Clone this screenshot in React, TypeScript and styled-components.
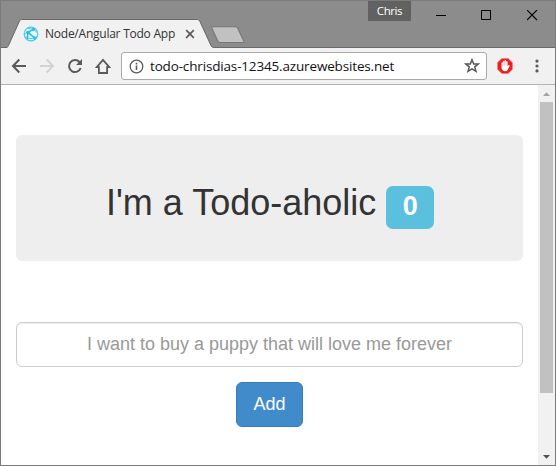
import React from "react";
import styled, { createGlobalStyle } from "styled-components";

const GlobalStyle = createGlobalStyle`
  *, *::before, *::after { box-sizing: border-box; }
  body { margin: 0; background: #fff; overflow: hidden; }
`;

const Window = styled.div`
  width: 556px;
  height: 466px;
  border: 1px solid #7b7b7b;
  display: flex;
  flex-direction: column;
  overflow: hidden;
  background: #fff;
  font-family: "Open Sans", "Noto Sans", sans-serif;
`;

const TitleBar = styled.div`
  flex: none;
  height: 47px;
  background: #8c8c8c;
  box-shadow: inset 0 -1px #696969;
  display: flex;
  align-items: flex-start;
`;

const Tab = styled.div`
  position: relative;
  width: 213px;
  height: 29px;
  margin-top: 18px;
  padding: 0 19px 0 22px;
  display: flex;
  align-items: center;
`;

const TabShape = styled.svg`
  position: absolute;
  inset: 0;
`;

const TabIcon = styled.svg`
  position: relative;
  flex: none;
  margin-right: 6px;
`;

const TabTitle = styled.span`
  position: relative;
  flex: 1;
  font-size: 12px;
  line-height: 16px;
  letter-spacing: -0.24px;
  white-space: nowrap;
  color: #333;
`;

const TabClose = styled.svg`
  position: relative;
  flex: none;
`;

const NewTab = styled.svg`
  flex: none;
  margin: 25px 0 0 -4px;
`;

const Profile = styled.div`
  width: 43px;
  height: 20px;
  margin-left: auto;
  background: #616161;
  color: #fff;
  font-size: 11.5px;
  line-height: 20px;
  letter-spacing: -0.4px;
  text-align: center;
`;

const WindowControls = styled.div`
  display: flex;
  gap: 34px;
  padding: 9px 17px 0 25px;
  svg { display: block; }
  svg:last-child { margin-left: 1px; }
`;

const Toolbar = styled.div`
  flex: none;
  height: 37px;
  background: #f1f1f1;
  border-bottom: 1px solid #b3b3b3;
  display: flex;
  align-items: center;
`;

const NavButtons = styled.div`
  width: 120px;
  display: flex;
  gap: 12px;
  padding-left: 10px;
  svg { display: block; }
`;

const AddressBar = styled.div`
  width: 366px;
  height: 28px;
  border: 1px solid #a9a9a9;
  border-radius: 3px;
  background: #fff;
  display: flex;
  align-items: center;
  padding: 0 6px 0 7px;
`;

const Url = styled.span`
  flex: 1;
  margin-left: 6px;
  font-size: 13.5px;
  line-height: 20px;
  letter-spacing: -0.16px;
  color: #111;
  white-space: nowrap;
`;

const Extensions = styled.div`
  flex: 1;
  display: flex;
  justify-content: space-between;
  padding: 0 13px 0 10px;
  align-items: center;
`;

const Viewport = styled.div`
  flex: 1;
  display: flex;
  min-height: 0;
`;

const Page = styled.main`
  flex: 1;
  padding: 50px 15px 0;
  text-align: center;
  font-family: "Liberation Sans", Arial, sans-serif;
`;

const Jumbotron = styled.header`
  height: 126px;
  padding-top: 48px;
  border-radius: 6px;
  background: #eee;
`;

const Heading = styled.h1`
  margin: 0;
  padding-left: 1px;
  font-size: 36px;
  font-weight: 500;
  line-height: 39.6px;
  color: #333;
  white-space: nowrap;
`;

const Count = styled.span`
  padding: 5.4px 16.4px 8px;
  border-radius: 6.75px;
  background: #5bc0de;
  color: #fff;
  font-size: 27px;
  font-weight: 700;
  line-height: 1;
  vertical-align: baseline;
`;

const TodoForm = styled.form`
  margin: 61px 0 0;
  display: flex;
  flex-direction: column;
  align-items: center;
  gap: 15px;
`;

const TodoInput = styled.input`
  width: 100%;
  height: 45px;
  padding: 10px 16px 11px;
  border: 1px solid #ccc;
  border-radius: 6px;
  box-shadow: inset 0 1px 1px rgba(0, 0, 0, 0.075);
  font: 18px "Liberation Sans", Arial, sans-serif;
  text-align: center;
  outline: 0;
  &::placeholder { color: #999; opacity: 1; }
`;

const AddButton = styled.button`
  width: 67px;
  height: 45px;
  padding: 0 0 1px;
  border: 1px solid #357ebd;
  border-radius: 6px;
  background: #428bca;
  color: #fff;
  font: 18px "Liberation Sans", Arial, sans-serif;
`;

const Scrollbar = styled.div`
  flex: none;
  width: 17px;
  background: #f1f1f1;
  display: flex;
  flex-direction: column;
  align-items: center;
  svg { display: block; flex: none; }
`;

const Track = styled.div`
  flex: 1;
`;

const Thumb = styled.div`
  width: 13px;
  height: 291px;
  background: #c1c1c1;
`;

export default function App() {
  return (
    <Window>
      <GlobalStyle />
      <TitleBar>
        <Tab>
          <TabShape width="213" height="29">
            <path d="M0 28.5H6L7 27.5L18.5 2Q19.2.5 20.5.5H196.5Q198 .5 198.7 2L210 27Q210.5 28.5 213 28.5V29H0Z" fill="#f1f1f1" />
            <path d="M0 28.5H5.5Q6.8 28.5 7.5 26.5L18.5 2Q19.2.5 20.5.5H196.5Q198 .5 198.7 2L210 26.5Q211 28.5 213 28.5" fill="none" stroke="#686868" />
            <path d="M0 27.6H6.5L5.5 29H0Z" fill="#8c8c8c" />
            <path d="M0 28.5H6" stroke="#696969" />
          </TabShape>
          <TabIcon width="16" height="16" viewBox="0 0 16 16">
            <circle cx="8" cy="8" r="6.8" fill="#eaf8fd" stroke="#43c9f2" strokeWidth="1.2" />
            <path d="M5 6.3L10.3 3.4M5 6.3L11.6 11.8M5 6.3L4.3 12" fill="none" stroke="#21bceb" strokeWidth="1.5" />
            <path d="M1.5 9.5Q2 6.5 5 6.3M10.3 3.4Q12.8 4.5 14.4 7M4.3 12Q8 13.2 11.6 11.8L14 10.5M5 2.3L10.3 3.4" fill="none" stroke="#4dcaf2" strokeWidth="1" />
            <circle cx="4.8" cy="6.3" r="1.6" fill="#21bceb" />
            <circle cx="10.4" cy="3.5" r="1.4" fill="#21bceb" />
            <circle cx="11.7" cy="11.9" r="1.5" fill="#21bceb" />
            <circle cx="4.3" cy="12" r="1.1" fill="#21bceb" />
          </TabIcon>
          <TabTitle>Node/Angular Todo App</TabTitle>
          <TabClose width="10" height="10" viewBox="0 0 10 10">
            <path d="M1.2 1.2L8.8 8.8M8.8 1.2L1.2 8.8" stroke="#5a5a5a" strokeWidth="1.7" />
          </TabClose>
        </Tab>
        <NewTab width="36" height="18" viewBox="0 0 36 18">
          <path d="M3 .7H25.5Q27 .7 27.6 2L33.8 15Q34.5 16.5 32.8 16.5H10.5Q8.5 16.5 7.8 15L1.9 2.2Q1.3.7 3 .7Z" fill="#c1c1c1" stroke="#777" strokeWidth="1.1" />
        </NewTab>
        <Profile>Chris</Profile>
        <WindowControls>
          <svg width="11" height="11"><path d="M0 5.5H10" stroke="#000" /></svg>
          <svg width="11" height="11"><path d="M.5.5H9.5V9.5H.5Z" fill="none" stroke="#000" /></svg>
          <svg width="11" height="11"><path d="M0 0L10 10M10 0L0 10" stroke="#000" strokeWidth="1.1" /></svg>
        </WindowControls>
      </TitleBar>
      <Toolbar>
        <NavButtons>
          <svg width="16" height="16" fill="none" stroke="#5a5a5a" strokeWidth="2"><path d="M15 8H2.5M8.3 1.5L2 8L8.3 14.5" /></svg>
          <svg width="16" height="16" fill="none" stroke="#d2d2d2" strokeWidth="2"><path d="M1 8H13.5M7.7 1.5L14 8L7.7 14.5" /></svg>
          <svg width="16" height="16" fill="none" stroke="#5a5a5a" strokeWidth="2"><path d="M13.7 10A6 6 0 1 1 12.5 4L14 5.5" /><path d="M15 1V7H9Z" fill="#5a5a5a" stroke="none" /></svg>
          <svg width="16" height="16" fill="none" stroke="#5a5a5a" strokeWidth="1.8"><path d="M3.9 8.2V15H12.1V8.2M3.9 9H1.9L8 1.8L14.1 9H12.1" /></svg>
        </NavButtons>
        <AddressBar>
          <svg width="15" height="15" viewBox="0 0 15 15"><circle cx="7.5" cy="7.5" r="6.3" fill="none" stroke="#5a5a5a" strokeWidth="1.3" /><path d="M7.5 6.5V11M7.5 3.8V5.4" stroke="#5a5a5a" strokeWidth="1.6" /></svg>
          <Url>todo-chrisdias-12345.azurewebsites.net</Url>
          <svg width="16" height="16" viewBox="0 0 16 16"><path d="M8 1.7L9.7 6H14.2L10.7 8.8L12 13.4L8 10.8L4 13.4L5.3 8.8L1.8 6H6.3Z" fill="none" stroke="#5a5a5a" strokeWidth="1.5" /></svg>
        </AddressBar>
        <Extensions>
          <svg width="16" height="16" viewBox="0 0 16 16">
            <path d="M4.8.5H11.2L15.5 4.8V11.2L11.2 15.5H4.8L.5 11.2V4.8Z" fill="#ee1c1c" stroke="#f58080" strokeWidth=".8" />
            <path d="M4.5 8V4.8Q5.2 3.9 5.8 4.8V3.3Q6.6 2.3 7.4 3.2V2.5Q8.2 1.6 9 2.5V3.5Q9.8 2.6 10.6 3.6V8L11.8 6.9Q13 6.9 12.6 7.9L10.5 12.3Q9.8 13.3 8.3 13.3Q5 13 4.5 10Z" fill="#fff" />
            <path d="M5.9 4.5V8M7.4 3.2V7.5M9 3.2V7.5" stroke="#ee8a8a" strokeWidth=".5" />
          </svg>
          <svg width="10" height="16" fill="#5a5a5a"><circle cx="5" cy="3.1" r="1.6" /><circle cx="5" cy="8" r="1.6" /><circle cx="5" cy="12.9" r="1.6" /></svg>
        </Extensions>
      </Toolbar>
      <Viewport>
        <Page>
          <Jumbotron>
            <Heading>I'm a Todo-aholic <Count>0</Count></Heading>
          </Jumbotron>
          <TodoForm onSubmit={(event) => event.preventDefault()}>
            <TodoInput placeholder="I want to buy a puppy that will love me forever" />
            <AddButton type="submit">Add</AddButton>
          </TodoForm>
        </Page>
        <Scrollbar>
          <svg width="17" height="17"><path d="M5 11H12L8.5 7.3Z" fill="#a3a3a3" /></svg>
          <Track><Thumb /></Track>
          <svg width="17" height="17"><path d="M5 7H12L8.5 10.7Z" fill="#505050" /></svg>
        </Scrollbar>
      </Viewport>
    </Window>
  );
}
